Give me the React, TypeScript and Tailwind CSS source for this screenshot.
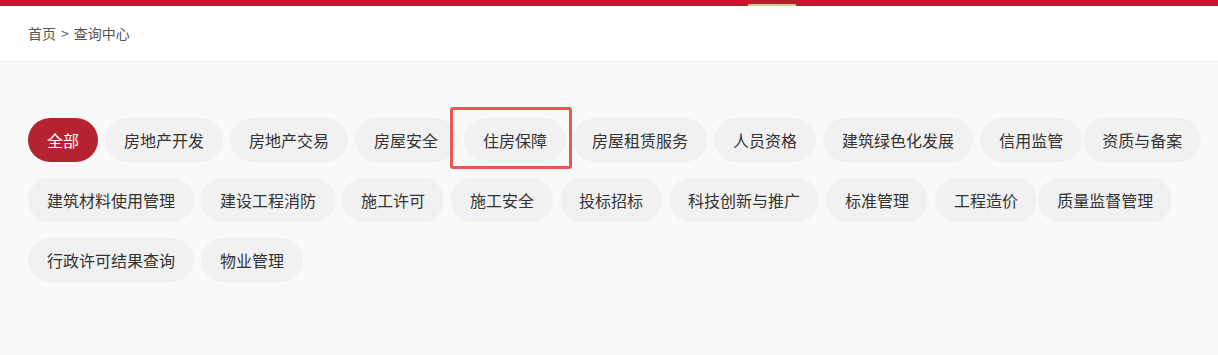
import React from "react";

interface Tag {
  label: string;
  tight?: boolean; // no gap after this pill
  marked?: boolean;
}

const rows: Tag[][] = [
  [
    { label: "全部" },
    { label: "房地产开发" },
    { label: "房地产交易" },
    { label: "房屋安全" },
    { label: "住房保障", marked: true },
    { label: "房屋租赁服务" },
    { label: "人员资格" },
    { label: "建筑绿色化发展" },
    { label: "信用监管", tight: true },
    { label: "资质与备案" },
  ],
  [
    { label: "建筑材料使用管理" },
    { label: "建设工程消防" },
    { label: "施工许可" },
    { label: "施工安全" },
    { label: "投标招标" },
    { label: "科技创新与推广" },
    { label: "标准管理" },
    { label: "工程造价", tight: true },
    { label: "质量监督管理" },
  ],
  [{ label: "行政许可结果查询" }, { label: "物业管理" }],
];

const App: React.FC = () => {
  const active = "全部";

  return (
    <div
      className="w-[1218px] h-[355px] bg-[#f9f9f9] overflow-hidden"
      style={{ fontFamily: '"Noto Sans CJK SC", "Noto Sans", sans-serif' }}
    >
      {/* top bar */}
      <div className="relative h-[6px] bg-[#c1162b]">
        <div className="absolute left-[748px] bottom-0 w-[48px] h-[2px] bg-[#dcc283]" />
      </div>

      {/* breadcrumb */}
      <div className="h-[56px] bg-white border-b border-[#ededed] flex items-center pl-[28px] text-[14px] text-[#555]">
        <span>首页</span>
        <span className="mx-[5px]">&gt;</span>
        <span>查询中心</span>
      </div>

      {/* tags */}
      <div className="flex flex-col gap-4 pt-[56px] pl-[28px]">
        {rows.map((row, i) => (
          <div key={i} className="flex">
            {row.map((t) => {
              const isActive = t.label === active;
              return (
                <div
                  key={t.label}
                  className={`relative shrink-0 ${t.tight ? "mr-[1px]" : "mr-[7px]"}`}
                >
                  <button
                    className={`h-[44px] px-[19px] rounded-[22px] text-[16px] leading-none whitespace-nowrap ${
                      isActive ? "bg-[#b52330] text-white" : "bg-[#f1f1f1] text-[#333]"
                    }`}
                  >
                    {t.label}
                  </button>
                  {t.marked && (
                    <div className="absolute -left-[14px] -right-[6px] -top-[11px] -bottom-[7px] border-[3px] border-[#f45353] rounded-[3px] pointer-events-none" />
                  )}
                </div>
              );
            })}
          </div>
        ))}
      </div>
    </div>
  );
};

export default App;
